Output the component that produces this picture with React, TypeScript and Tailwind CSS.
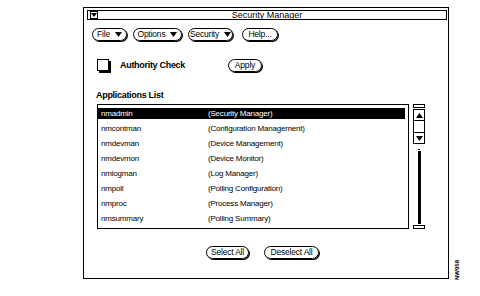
import React from "react";

const font = { fontFamily: '"Liberation Sans", Arial, sans-serif' };

function Tri({ up = false }: { up?: boolean }) {
  return (
    <svg width="7" height="5" viewBox="0 0 7 5" className="block">
      {up ? <polygon points="0,5 7,5 3.5,0" fill="#000" /> : <polygon points="0,0 7,0 3.5,5" fill="#000" />}
    </svg>
  );
}

function Btn({ label, menu = false, w }: { label: string; menu?: boolean; w: string }) {
  return (
    <div
      className={`${w} h-[13px] flex items-center justify-center gap-[5px] rounded-full border border-black shadow-[1px_1px_0_#000] text-[8.5px] tracking-[-0.2px] leading-none text-black`}
    >
      <span>{label}</span>
      {menu && <Tri />}
    </div>
  );
}

const rows: [string, string][] = [
  ["nmadmin", "(Security Manager)"],
  ["nmcontman", "(Configuration Management)"],
  ["nmdevman", "(Device Management)"],
  ["nmdevmon", "(Device Monitor)"],
  ["nmlogman", "(Log Manager)"],
  ["nmpoll", "(Polling Configuration)"],
  ["nmproc", "(Process Manager)"],
  ["nmsummary", "(Polling Summary)"],
];

export default function App() {
  return (
    <div className="w-[480px] h-[296px] bg-white flex items-end" style={font}>
      <div className="ml-[83px] mb-[17px] w-[366px] h-[272px] border border-black flex flex-col">
        {/* title bar */}
        <div className="ml-[3px] mr-[1px] mt-[2px] h-[10px] border border-black flex items-center">
          <div className="ml-[2px] w-[8px] h-[8px] border border-black flex items-center justify-center">
            <svg width="6" height="4" viewBox="0 0 6 4"><polygon points="0,0 6,0 3,4" fill="#000" /></svg>
          </div>
          <div className="flex-1 text-center text-[9px] leading-none pr-[10px]">Security Manager</div>
        </div>
        {/* menu buttons */}
        <div className="mt-[8px] ml-[8px] flex gap-[6px]">
          <Btn label="File" menu w="w-[35px]" />
          <Btn label="Options" menu w="w-[49px]" />
          <Btn label="Security" menu w="w-[45px]" />
          <div className="ml-[3px]">
            <Btn label="Help..." w="w-[36px]" />
          </div>
        </div>
        {/* authority */}
        <div className="mt-[17px] ml-[13px] flex items-center h-[14px]">
          <div className="w-[12px] h-[12px] border border-black shadow-[2px_2px_0_#000]" />
          <div className="ml-[11px] w-[108px] text-[9px] font-bold tracking-[-0.3px] leading-none">Authority Check</div>
          <Btn label="Apply" w="w-[34px]" />
        </div>
        <div className="mt-[19px] ml-[12px] text-[9px] font-bold tracking-[-0.3px] leading-none">Applications List</div>
        {/* list + scrollbar */}
        <div className="mt-[4px] ml-[13px] flex">
          <div className="w-[312px] h-[125px] border border-black pt-[3px]">
            {rows.map(([a, b], i) => (
              <div
                key={a}
                className={`h-[11px] mb-[4px] mr-[3px] flex items-center text-[8px] tracking-[-0.2px] leading-none ${
                  i === 0 ? "bg-black text-white" : "text-black"
                }`}
              >
                <span className="w-[110px] pl-[3px]">{a}</span>
                <span>{b}</span>
              </div>
            ))}
          </div>
          <div className="ml-[4px] w-[12px] flex flex-col items-center">
            <div className="w-[12px] h-[4px] border border-black" />
            <div className="mt-[1px] w-[12px] h-[35px] border border-black flex flex-col">
              <div className="h-[11px] border-b border-black flex items-center justify-center">
                <Tri up />
              </div>
              <div className="flex-1" />
              <div className="h-[11px] border-t border-black flex items-center justify-center">
                <Tri />
              </div>
            </div>
            <div className="mt-[5px] w-[2px] h-[1px] bg-black" />
            <div className="mt-[1px] w-[3px] h-[73px] bg-black" />
            <div className="mt-[1px] w-[12px] h-[4px] border border-black" />
          </div>
        </div>
        {/* bottom buttons */}
        <div className="mt-[17px] ml-[122px] flex gap-[15px]">
          <Btn label="Select All" w="w-[43px]" />
          <Btn label="Deselect All" w="w-[55px]" />
        </div>
      </div>
      <div className="ml-[4px] mb-[14px] w-[8px] h-[24px] flex items-center justify-center">
        <div className="-rotate-90 text-[6px] font-bold leading-none whitespace-nowrap">NW958</div>
      </div>
    </div>
  );
}
